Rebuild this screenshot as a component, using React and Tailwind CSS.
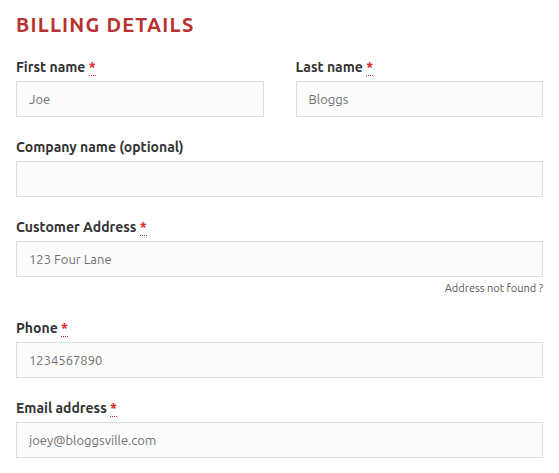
import React from 'react';

const fields = [
  { label: 'Company name (optional)', value: '', required: false },
  { label: 'Customer Address', value: '123 Four Lane', required: true, hint: 'Address not found ?' },
  { label: 'Phone', value: '1234567890', required: true },
  { label: 'Email address', value: 'joey@bloggsville.com', required: true },
];

function Label({ text, required }) {
  return (
    <label className="block h-5 mb-1 text-[14px] leading-5 font-bold text-[#333]">
      {text}
      {required && (
        <>
          {' '}
          <abbr className="text-[#e02b27] no-underline border-b border-dotted border-[#e02b27]" title="required">
            *
          </abbr>
        </>
      )}
    </label>
  );
}

function Input({ value }) {
  return (
    <input
      type="text"
      defaultValue={value}
      className="block w-full h-[36px] px-[12px] border border-[#dddddd] bg-[#fcfcfc] text-[13px] text-[#707070] outline-none"
    />
  );
}

export default function App() {
  return (
    <div className="w-[559px] h-[473px] bg-white px-4 pt-[13px] font-['Ubuntu','Open_Sans',sans-serif] overflow-hidden">
      <h3 className="text-[20px] leading-6 font-bold tracking-[1.2px] text-[#b83232] mb-[20px]">
        BILLING DETAILS
      </h3>

      <div className="grid grid-cols-2 gap-x-8 mb-5">
        <div>
          <Label text="First name" required />
          <Input value="Joe" />
        </div>
        <div>
          <Label text="Last name" required />
          <Input value="Bloggs" />
        </div>
      </div>

      {fields.map((f) => (
        <div key={f.label} className={f.hint ? 'mb-[22px]' : 'mb-5'}>
          <Label text={f.label} required={f.required} />
          <Input value={f.value} />
          {f.hint && (
            <div className="text-right text-[11px] leading-4 text-[#555] mt-[3px]">{f.hint}</div>
          )}
        </div>
      ))}
    </div>
  );
}
